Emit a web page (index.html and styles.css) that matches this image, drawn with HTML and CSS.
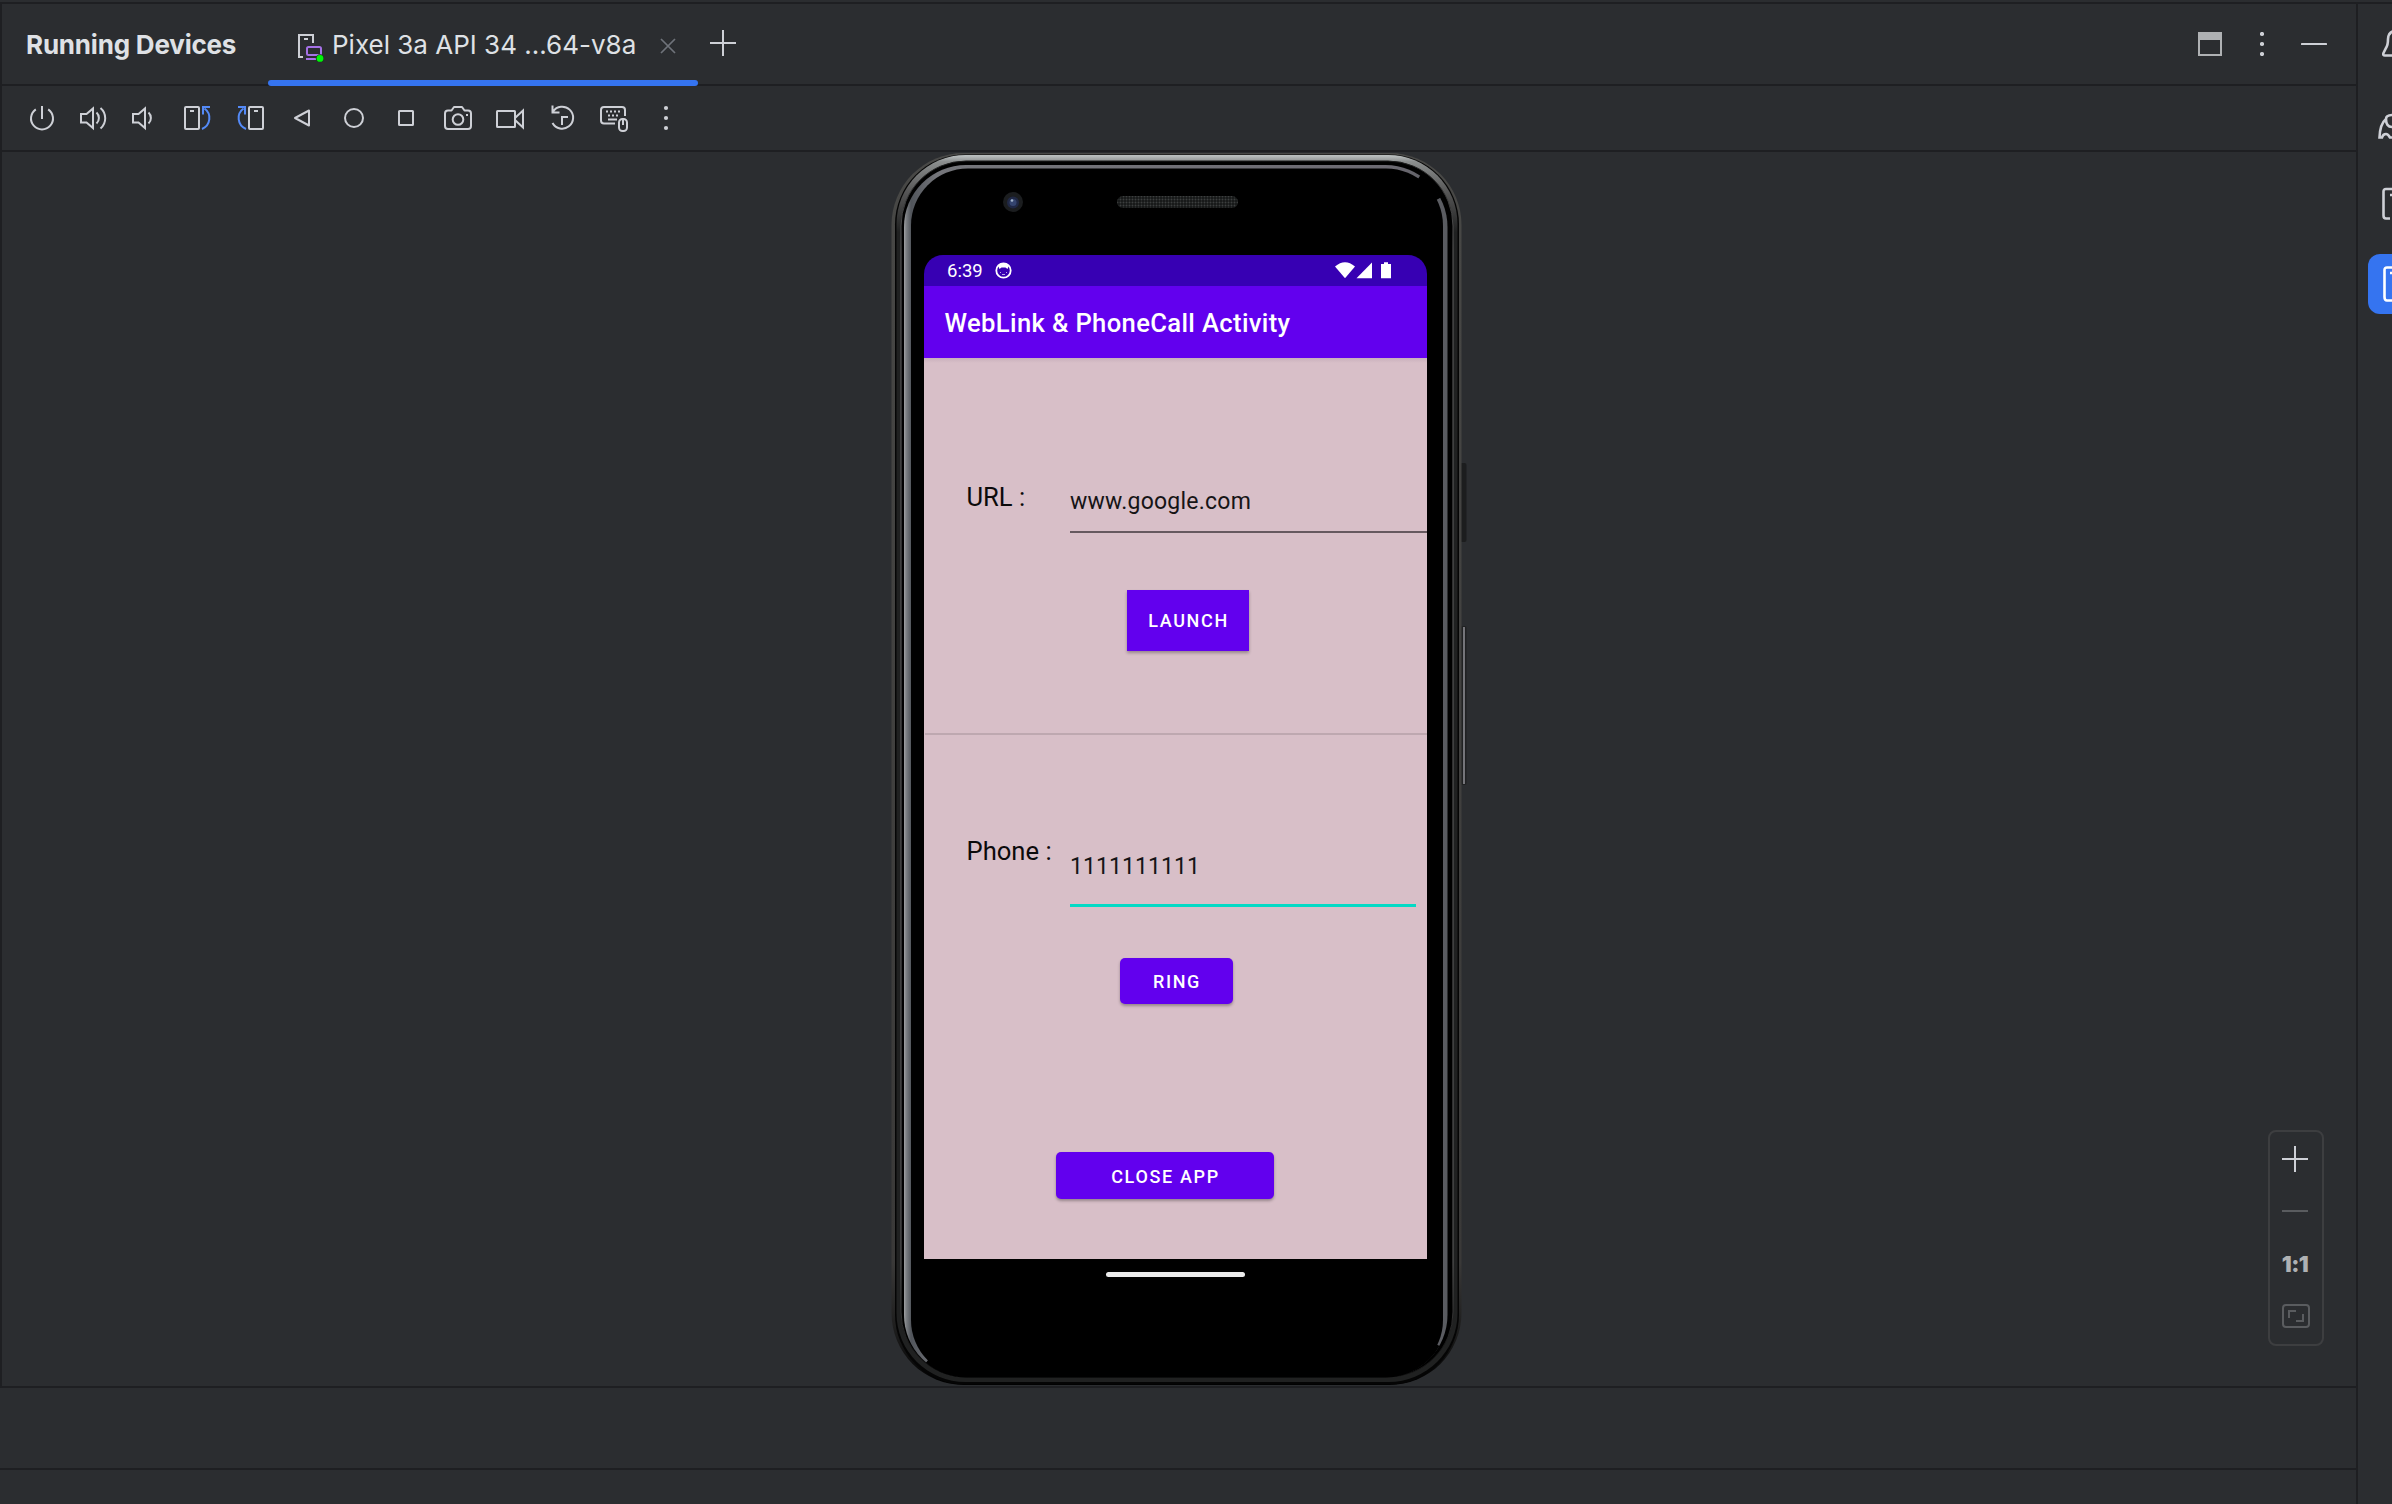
FILE: index.html
```html
<!DOCTYPE html>
<html lang="en">
<head>
<meta charset="utf-8">
<title>Running Devices</title>
<link rel="stylesheet" href="styles.css">
</head>
<body>
<div class="ide">
  <main class="panel">
    <header class="tabs">
      <h1 class="title">Running Devices</h1>
      <div class="tab">
        <svg class="tab-icon" width="28" height="30" viewBox="0 0 28 30" fill="none" stroke-width="2"><path d="M7 25H3V3H17V11" stroke="#ced0d6"/><path d="M8 7H12" stroke="#ced0d6"/><rect x="11" y="15" width="14" height="8" rx="1.5" stroke="#a571e6"/><path d="M10 27H20" stroke="#a571e6"/><circle cx="24" cy="26.400" r="4.2" fill="#173a17"/><circle cx="24" cy="26.400" r="3.4" fill="#00f40a"/></svg>
        <span class="tab-name">Pixel 3a API 34 ...64-v8a</span>
        <svg class="tab-close" width="16" height="16" viewBox="0 0 16 16" stroke="#6f737a" stroke-width="1.7"><path d="M1 1L15 15M15 1L1 15"/></svg>
      </div>
      <svg class="tab-add" width="26" height="26" viewBox="0 0 26 26" stroke="#ced0d6" stroke-width="2"><path d="M13 0V26M0 13H26"/></svg>
      <div class="window-actions">
        <svg width="24" height="24" viewBox="0 0 24 24"><rect x="1" y="1" width="22" height="22" fill="none" stroke="#afb1b3" stroke-width="2"/><rect width="24" height="8" fill="#afb1b3"/></svg>
        <svg width="4" height="24" viewBox="0 0 4 24" fill="#ced0d6"><circle cx="2" cy="2" r="2.1"/><circle cx="2" cy="12" r="2.1"/><circle cx="2" cy="22" r="2.1"/></svg>
        <svg width="26" height="2" viewBox="0 0 26 2"><rect width="26" height="2" rx=".6" fill="#ced0d6"/></svg>
      </div>
    </header>

    <nav class="toolbar">
      <svg viewBox="0 0 32 32"><path d="M9.800 7.300A11 11 0 1 0 22.200 7.300M16 4V17"/></svg>
      <svg viewBox="0 0 32 32"><path d="M3 12H8.500L15 6.500V26L8.500 20.500H3ZM18.500 10.500A7.500 7.500 0 0 1 18.500 21.500M22.500 6A13.500 13.500 0 0 1 22.500 26.500"/></svg>
      <svg viewBox="0 0 32 32"><path d="M3 12H8.500L15 6.500V26L8.500 20.500H3ZM18.500 10.500A7.500 7.500 0 0 1 18.500 21.500"/></svg>
      <svg viewBox="0 0 32 32"><rect x="3" y="5" width="14" height="22" rx="1"/><path d="M8 9H12"/><path class="blue" d="M20 27A11.800 11.800 0 0 0 22.500 6.500M21 12.500V5H28"/></svg>
      <svg viewBox="0 0 32 32"><rect x="15" y="5" width="14" height="22" rx="1"/><path d="M20 9H24"/><path class="blue" d="M12 27A11.800 11.800 0 0 1 9.500 6.500M11 12.500V5H4"/></svg>
      <svg viewBox="0 0 32 32"><path stroke-linejoin="round" d="M23 8.500V23.500L9 16Z"/></svg>
      <svg viewBox="0 0 32 32"><circle cx="16" cy="16" r="9"/></svg>
      <svg viewBox="0 0 32 32"><rect x="9" y="9" width="14" height="14" rx=".5"/></svg>
      <svg viewBox="0 0 32 32"><path stroke-linejoin="round" d="M6 8.500H9.500L12 5H20L22.500 8.500H26Q29 8.500 29 11.500V24Q29 27 26 27H6Q3 27 3 24V11.500Q3 8.500 6 8.500Z"/><circle cx="16" cy="17.500" r="5.300"/><path d="M24 13H26"/></svg>
      <svg viewBox="0 0 32 32"><rect x="3" y="9" width="18" height="16" rx=".5"/><path d="M21 16L29 8.500V25.500L21 18"/></svg>
      <svg viewBox="0 0 32 32"><path d="M7 9.500A11 11 0 1 1 6.500 21M6.500 3.500V10.500H13.500M16 23V15H22"/></svg>
      <svg viewBox="0 0 32 32"><path d="M17 21.500H6Q3 21.500 3 18.500V8Q3 5 6 5H24Q27 5 27 8V14M10 17.500H19"/><path stroke-dasharray="2 2" d="M8 9.500H23M10 13.500H21"/><rect x="21" y="17" width="8" height="12" rx="3.500"/><path d="M25 18V23"/></svg>
      <svg class="dots" viewBox="0 0 32 32"><circle cx="16" cy="6" r="2.100"/><circle cx="16" cy="16" r="2.100"/><circle cx="16" cy="26" r="2.100"/></svg>
    </nav>

    <section class="viewport">
      <div class="device">
        <svg class="frame" width="584" height="1234" viewBox="884 152 584 1234">
          <defs>
            <linearGradient id="rim" gradientUnits="userSpaceOnUse" x1="0" y1="152" x2="0" y2="232"><stop offset="0" stop-color="#5c5c5c"/><stop offset=".045" stop-color="#bcc1c1"/><stop offset=".12" stop-color="#8c8f8f"/><stop offset=".5" stop-color="#565656"/><stop offset="1" stop-color="#202121"/></linearGradient>
            <linearGradient id="edge" gradientUnits="userSpaceOnUse" x1="0" y1="152" x2="0" y2="1386"><stop offset="0" stop-color="#484846"/><stop offset=".9" stop-color="#3a3938"/><stop offset=".96" stop-color="#1a1a1a"/><stop offset="1" stop-color="#000"/></linearGradient>
            <linearGradient id="line" gradientUnits="userSpaceOnUse" x1="0" y1="152" x2="0" y2="1386"><stop offset="0" stop-color="#161616"/><stop offset=".08" stop-color="#5e5e5e"/><stop offset=".9" stop-color="#5e5e5e"/><stop offset=".97" stop-color="#161616"/></linearGradient>
            <linearGradient id="glass" gradientUnits="userSpaceOnUse" x1="904" y1="0" x2="1447" y2="0"><stop offset="0" stop-color="#a0a2a4"/><stop offset=".004" stop-color="#7d8084"/><stop offset=".013" stop-color="#51555b"/><stop offset=".06" stop-color="#75767b"/><stop offset=".9" stop-color="#6c6a72"/><stop offset="1" stop-color="#595b60"/></linearGradient>
            <pattern id="mesh" width="3" height="3" patternUnits="userSpaceOnUse"><rect width="3" height="3" fill="#151616"/><circle cx="1.500" cy="1.500" r="1" fill="#3c3f3f"/></pattern>
          </defs>
          <rect x="1460" y="463" width="6.500" height="79" rx="2" fill="#1c1d1e"/>
          <rect x="1461" y="626" width="5.500" height="159" rx="2" fill="#202122"/>
          <rect x="1463" y="627" width="2" height="157" fill="#75757a"/>
          <rect x="891.500" y="153" width="570" height="1232" rx="72" fill="url(#edge)"/>
          <rect x="895" y="154.500" width="564" height="1230" rx="70" fill="#050505"/>
          <rect x="896.500" y="155" width="561" height="1227" rx="69" fill="url(#rim)"/>
          <rect x="901" y="161" width="552" height="1216" rx="65" fill="#000" stroke="url(#line)"/>
          <rect x="904" y="165" width="543.500" height="1212" rx="62" fill="url(#glass)"/>
          <rect x="911" y="168.500" width="532" height="1208.500" rx="57" fill="#000"/>
          <path d="M1418.500 178.100A59 59 0 0 1 1437.600 199.300" fill="none" stroke="#000" stroke-width="7.500"/>
          <path d="M928.400 1359.800A58.500 58.500 0 0 0 966 1373.500H1385.500A58.500 58.500 0 0 0 1436 1344" fill="none" stroke="#000" stroke-width="8"/>
          <circle cx="1013" cy="202" r="10" fill="#1b1d1f"/><circle cx="1013" cy="202.500" r="6" fill="#202845"/><circle cx="1013" cy="202.500" r="3.500" fill="#34446f"/><circle cx="1012" cy="200.500" r="1.300" fill="#a2b3cb"/>
          <rect x="1117" y="196" width="121" height="12" rx="6" fill="url(#mesh)"/>
        </svg>
        <div class="screen">
          <div class="status">
            <span class="clock">6:39</span>
            <svg width="17" height="17" viewBox="0 0 17 17"><circle cx="8.500" cy="8.500" r="7.200" fill="none" stroke="#fff" stroke-width="1.800"/><path d="M3 3.500Q8.500 -1 14 3.500L12.500 7L10.500 5.500H6.500L4.500 7Z" fill="#fff"/><path d="M5 10.500H6M11 10.500H12M7 12.500H10" stroke="#b9a6e8"/></svg>
            <svg class="signals" width="58" height="17" viewBox="0 0 58 17" fill="#fff"><path d="M0 4.500Q10 -4 20 4.500L10 16.300Z"/><path d="M37 .5V16.300H21.500Z"/><path d="M46 2H49V.3H53V2H56V16.300H46Z"/></svg>
          </div>
          <div class="appbar">WebLink &amp; PhoneCall Activity</div>
          <div class="content">
            <div class="row url"><label>URL :</label><div class="field">www.google.com</div></div>
            <div class="btn launch">LAUNCH</div>
            <div class="divider"></div>
            <div class="row phone"><label>Phone :</label><div class="field">1111111111</div></div>
            <div class="btn ring">RING</div>
            <div class="btn close">CLOSE APP</div>
          </div>
          <div class="home"></div>
        </div>
      </div>
      <aside class="zoom">
        <svg width="26" height="26" viewBox="0 0 26 26" stroke="#ced0d6" stroke-width="2"><path d="M13 0V26M0 13H26"/></svg>
        <svg class="out" width="26" height="2" viewBox="0 0 26 2"><rect width="26" height="2" fill="#5a5c5f"/></svg>
        <span class="ratio">1:1</span>
        <svg class="fit" width="28" height="24" viewBox="0 0 28 24" fill="none" stroke="#5a5c5f" stroke-width="2"><rect x="1" y="1" width="26" height="22" rx="3"/><path d="M7 14V7H14M21 10V17H14"/></svg>
      </aside>
    </section>
    <div class="lower"></div>
    <footer class="bottom"></footer>
  </main>

  <aside class="stripe">
    <svg class="bell" width="10" height="32" viewBox="0 0 10 32"><path d="M12 3Q6.500 4 6 11Q6 17 4 20L1.500 25Q.5 27.500 3 27.500H12"/></svg>
    <svg class="gradle" width="14" height="28" viewBox="0 0 14 28"><path d="M15 2Q8 2 8 6C8 11 10 14 14 14M8 6Q2 11 1.500 24.500H4Q5 21 8 21Q10 21 12 24.500H15"/></svg>
    <svg class="manager" width="10" height="34" viewBox="0 0 10 34"><path d="M12 2H4Q1.500 2 1.500 4.500V28.500Q1.500 31.500 4 31.500H8M8 8H12"/></svg>
    <div class="active"><svg width="9" height="36" viewBox="0 0 9 36"><path d="M12 1.500H4Q1.500 1.500 1.500 4V31Q1.500 34.500 4 34.500H12M7 7H12"/></svg></div>
  </aside>
</div>
</body>
</html>
```
FILE: styles.css
```css
* { box-sizing: border-box; }
body { margin: 0; background: #2b2d30; font-family: Inter, sans-serif; color: #dfe1e5; overflow: hidden; }
svg { display: block; flex: none; }

.ide { display: grid; grid-template-columns: 2358px 34px; width: 2392px; height: 1504px; padding-top: 2px; overflow: hidden; }
.panel { display: flex; flex-direction: column; border-top: 2px solid #1e1f22; border-right: 2px solid #1e1f22; }

.tabs { display: flex; height: 82px; border-bottom: 2px solid #1e1f22; border-left: 2px solid #1e1f22; padding-left: 24px; flex: none; }
.title { margin: 0; width: 242px; font-size: 26px; font-weight: 700; letter-spacing: -.200px; line-height: 81px; white-space: nowrap; }
.tab { position: relative; display: flex; width: 430px; height: 82px; padding-left: 28px; }
.tab::after { content: ""; position: absolute; left: 0; bottom: 0; width: 430px; height: 6px; border-radius: 3px; background: #3574f0; }
.tab-icon { margin-top: 28px; }
.tab-name { width: 324px; margin-left: 8px; font-size: 26px; line-height: 81px; white-space: nowrap; }
.tab-close { margin-top: 34px; margin-left: 4px; }
.tab-add { margin: 26px 0 0 12px; }
.window-actions { display: flex; align-items: center; gap: 38px; height: 80px; margin-left: auto; padding-right: 28px; }
.window-actions svg:last-child { margin: 0 1px 0 -1px; }

.toolbar { display: flex; align-items: center; gap: 20px; height: 66px; border-bottom: 2px solid #1e1f22; border-left: 2px solid #1e1f22; padding-left: 24px; flex: none; }
.toolbar svg { width: 32px; height: 32px; fill: none; stroke: #ced0d6; stroke-width: 2; }
.toolbar .blue { stroke: #548af7; }
.toolbar .dots { fill: #ced0d6; stroke: none; }

.viewport { display: flex; height: 1236px; border-bottom: 2px solid #1e1f22; border-left: 2px solid #1e1f22; padding-left: 882px; flex: none; }
.device { position: relative; width: 584px; height: 1234px; padding: 103px 0 0 40px; font-family: Roboto, sans-serif; }
.frame { position: absolute; left: 0; top: 0; }
.screen { position: relative; width: 503px; height: 1034px; border-radius: 19px 19px 0 0; overflow: hidden; background: #000; color: #fff; }
.status { display: flex; align-items: center; height: 31px; padding-left: 23px; background: #3700b3; }
.clock { width: 48px; font-size: 18.500px; line-height: 31px; padding-top: 1px; }
.signals { margin-left: auto; margin-right: 34px; }
.appbar { height: 71.500px; padding-left: 20.500px; background: #6200ee; font-size: 25.600px; font-weight: 500; letter-spacing: .360px; line-height: 74px; white-space: nowrap; }
.content { display: flex; flex-direction: column; height: 901.500px; background: linear-gradient(#c9b0bc, #d8bfc8 5px); color: #161416; }
.row { display: flex; align-items: flex-start; }
.row label { width: 146px; padding-left: 42.500px; flex: none; font-size: 25.600px; white-space: nowrap; color: #0b0a0b; }
.field { flex: none; font-size: 23px; letter-spacing: .240px; line-height: 64px; white-space: nowrap; }
.url { margin-top: 112px; }
.url label { line-height: 55px; }
.url .field { width: 357px; height: 63px; border-bottom: 2px solid #66595f; }
.btn { flex: none; background: #6200ee; color: #fff; border-radius: 5px; font-size: 18px; font-weight: 500; letter-spacing: 1.650px; text-indent: 1px; text-align: center; white-space: nowrap; box-shadow: 0 2px 3px rgba(0, 0, 0, .3); }
.launch { width: 122px; height: 61px; margin: 57.500px 0 0 203px; border-radius: 0; line-height: 62px; }
.divider { height: 2px; margin: 82px 0 0 1px; background: #bea8b0; }
.phone { margin-top: 100px; }
.phone label { line-height: 32.500px; }
.phone .field { width: 346px; height: 72px; border-bottom: 3px solid #03dac5; letter-spacing: .060px; }
.ring { width: 113px; height: 46.500px; margin: 50.500px 0 0 196px; line-height: 48px; }
.close { width: 218px; height: 47px; margin: 148px 0 0 132px; line-height: 49px; }
.home { width: 139px; height: 5px; margin: 13px auto 0 182px; border-radius: 3px; background: #ececec; }

.zoom { display: flex; flex-direction: column; align-items: center; width: 56px; height: 216px; margin: 978px 0 0 800px; padding-top: 14px; border: 2px solid #3d3e40; border-radius: 8px; }
.zoom svg { margin-right: 2px; }
.zoom .out { margin-top: 38px; }
.ratio { margin: 40px 2px 0 0; height: 24px; font-size: 22px; font-weight: 900; letter-spacing: -.500px; line-height: 24px; color: #afb1b3; }
.zoom .fit { margin: 28px 0 0; }

.lower { height: 82px; border-bottom: 2px solid #1e1f22; flex: none; }
.bottom { height: 34px; }

.stripe { border-top: 2px solid #1e1f22; display: flex; flex-direction: column; align-items: flex-end; overflow: hidden; }
.stripe svg { fill: none; stroke: #ced0d6; stroke-width: 2.600; }
.bell { margin-top: 24px; }
.gradle { margin-top: 53px; }
.manager { margin-top: 46px; }
.active { display: flex; align-items: center; justify-content: flex-end; width: 24px; height: 60px; margin-top: 33px; border-radius: 12px 0 0 12px; background: #3574f0; }
.stripe .active svg { stroke: #fff; margin-top: -1px; }
```
